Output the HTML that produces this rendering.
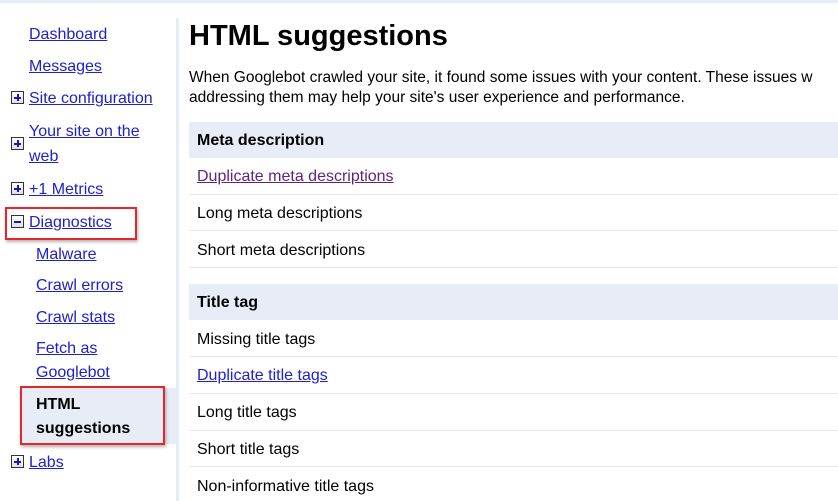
<!DOCTYPE html>
<html><head><style>
body{margin:0;width:838px;height:501px;overflow:hidden;background:#fff;font-family:"Liberation Sans",Arial,sans-serif;position:relative}
.a{position:absolute;white-space:nowrap;font-size:16px;line-height:20px}
.l{color:#2020cc;text-decoration:underline}
.pl{position:absolute;left:11px;width:11px;height:11px;border:1px solid #333;background:linear-gradient(#fff,#dde)}
.pl:before{content:"";position:absolute;left:2px;right:2px;top:5px;height:2px;background:#1a1aa8}
.pl.p:after{content:"";position:absolute;top:2px;bottom:2px;left:5px;width:2px;background:#1a1aa8}
.hd{position:absolute;left:189px;right:0;height:36px;background:#e8ecf7}
.ln{position:absolute;left:189px;right:0;height:1px;background:#e4e8f0}
.t{position:absolute;left:197px;font-size:16px;line-height:20px;color:#000;white-space:nowrap}
</style></head><body>
<div style="position:absolute;left:0;top:0;width:838px;height:3px;background:#e8ecf5"></div>
<div style="position:absolute;left:176px;top:18px;width:3px;height:483px;background:#e8ecf7"></div>
<div style="position:absolute;left:20px;top:388px;width:156px;height:56px;background:#e8ecf7"></div>

<div class="a l" style="left:29px;top:25px">Dashboard</div>
<div class="a l" style="left:29px;top:57px">Messages</div>
<div class="pl p" style="top:91px"></div><div class="a l" style="left:29px;top:89px">Site configuration</div>
<div class="a l" style="left:29px;top:122px">Your site on the</div>
<div class="pl p" style="top:137px"></div><div class="a l" style="left:29px;top:147px">web</div>
<div class="pl p" style="top:182px"></div><div class="a l" style="left:29px;top:180px">+1 Metrics</div>
<div class="pl" style="top:215px"></div><div class="a l" style="left:29px;top:213px">Diagnostics</div>
<div style="position:absolute;left:5px;top:207px;width:128px;height:29px;border:2px solid #e8262a;box-shadow:1px 2px 3px rgba(0,0,0,.3)"></div>
<div class="a l" style="left:36px;top:245px">Malware</div>
<div class="a l" style="left:36px;top:276px">Crawl errors</div>
<div class="a l" style="left:36px;top:308px">Crawl stats</div>
<div class="a l" style="left:36px;top:339px">Fetch as</div>
<div class="a l" style="left:36px;top:363px">Googlebot</div>
<div class="a" style="left:36px;top:395px;font-weight:bold">HTML</div>
<div class="a" style="left:36px;top:419px;font-weight:bold">suggestions</div>
<div style="position:absolute;left:20px;top:386px;width:141px;height:55px;border:2px solid #e8262a;box-shadow:1px 2px 3px rgba(0,0,0,.3)"></div>
<div class="pl p" style="top:455px"></div><div class="a l" style="left:29px;top:453px">Labs</div>

<div class="a" style="left:189px;top:19px;font-size:29px;line-height:34px;font-weight:bold">HTML suggestions</div>
<div class="a" style="left:189px;top:68px;font-size:15.5px">When Googlebot crawled your site, it found some issues with your content. These issues w</div>
<div class="a" style="left:189px;top:88px;font-size:15.5px">addressing them may help your site's user experience and performance.</div>

<div class="hd" style="top:122px"></div>
<div class="t" style="top:131px;font-weight:bold">Meta description</div>
<div class="t" style="top:167px;color:#60247e;text-decoration:underline">Duplicate meta descriptions</div>
<div class="ln" style="top:194px"></div>
<div class="t" style="top:204px">Long meta descriptions</div>
<div class="ln" style="top:230px"></div>
<div class="t" style="top:241px">Short meta descriptions</div>
<div class="ln" style="top:267px"></div>

<div class="hd" style="top:284px"></div>
<div class="t" style="top:293px;font-weight:bold">Title tag</div>
<div class="t" style="top:330px">Missing title tags</div>
<div class="ln" style="top:356px"></div>
<div class="t" style="top:366px;color:#2020cc;text-decoration:underline">Duplicate title tags</div>
<div class="ln" style="top:393px"></div>
<div class="t" style="top:403px">Long title tags</div>
<div class="ln" style="top:430px"></div>
<div class="t" style="top:440px">Short title tags</div>
<div class="ln" style="top:466px"></div>
<div class="t" style="top:477px">Non-informative title tags</div>
</body></html>
